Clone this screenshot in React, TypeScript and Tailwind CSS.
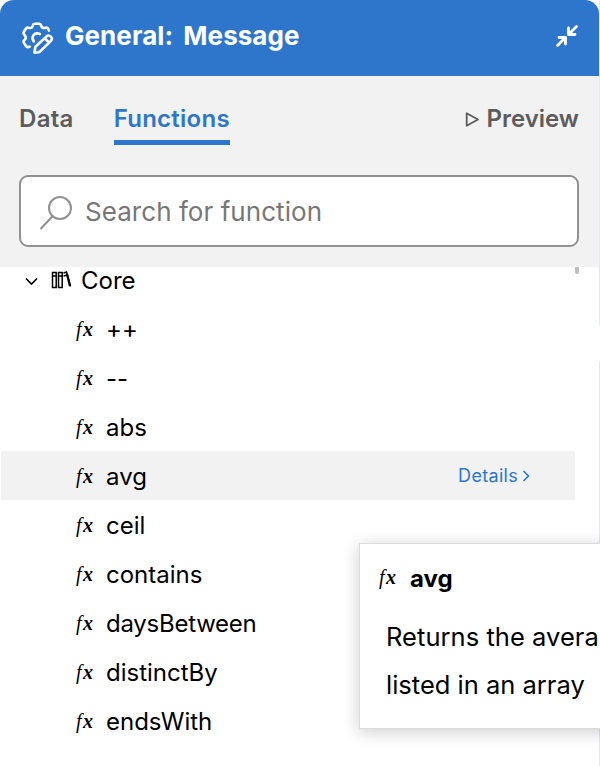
import React from "react";

const functionNames = ["++", "--", "abs", "avg", "ceil", "contains", "daysBetween", "distinctBy", "endsWith"];

function Fx() {
  return (
    <span className="flex h-6 w-[31px] shrink-0 items-center font-['Liberation_Serif',serif] text-[20px] leading-none text-black">
      <i className="ml-[1px] w-[6px] font-normal">f</i>
      <i className="ml-[1px] font-bold">x</i>
    </span>
  );
}

function GearPencil() {
  return (
    <svg width="34" height="34" viewBox="0 0 34 34" fill="none" stroke="white" strokeWidth="2.6" strokeLinecap="round" strokeLinejoin="round">
      <path d="M8.8 25.6 Q6 27 4.6 24.5 L3 21.8 Q2 20 3.7 18.8 Q5.8 16.8 3.9 14.5 Q1.8 12.5 2.9 10.7 L4.6 8 Q5.8 6.1 8 6.9 Q11 7.6 11.7 5 Q12.2 2.8 14.2 2.8 H17.8 Q19.7 2.8 20.3 5 Q21.2 7.6 24 6.9 Q26.3 6.1 27.2 7.9 L28 9.6" />
      <path d="M12.8 20.4 C9.6 16.2 13.2 10.6 18.8 13" />
      <path d="M13.4 31.7 L14.4 25.8 L25.6 15.4 Q27.7 13.5 29.8 15.6 Q31.9 17.8 29.9 19.9 L19.2 30.4 Q18.4 31 17.5 31.2 Z M23.8 17.3 L28 21.5" />
    </svg>
  );
}

export default function App() {
  return (
    <div className="relative h-[766px] w-[600px] overflow-hidden bg-white font-['Inter',sans-serif] text-black">
      <div className="flex h-full flex-col border-r border-[#e7e7f0]">
        <header className="flex h-[76px] shrink-0 items-center rounded-t-[14px] bg-[#2d76cc] pr-[20px] pl-[21px] text-white">
          <GearPencil />
          <h1 className="ml-[10px] pb-[5px] text-[26px] font-bold tracking-[0.05px] [word-spacing:4px] whitespace-pre">General: Message</h1>
          <svg className="-mt-[4px] ml-auto" width="24" height="24" viewBox="0 0 24 24" fill="none" stroke="white" strokeWidth="2.8" strokeLinejoin="round" strokeLinecap="round">
            <path d="M21.5 2.5 L14 10 M13.5 4 V10.5 H20 M2.5 21.5 L10 14 M4 13.5 H10.5 V20" />
          </svg>
        </header>
        <section className="h-[191px] shrink-0 bg-[#f2f2f2] pr-[20px] pl-[19px]">
          <nav className="flex h-[99px] items-start pt-[24px] text-[24px] font-semibold text-[#5c5c5c]">
            <span className="tracking-[0.3px] leading-[38px]">Data</span>
            <span className="ml-[40px] h-[45px] border-b-[5px] border-[#2d76cc] tracking-[0.25px] leading-[38px] text-[#2d76cc]">Functions</span>
            <span className="ml-auto flex items-center leading-[38px]">
              <svg className="mr-[6px]" width="15" height="17" viewBox="0 0 15 17" fill="none" stroke="#5c5c5c" strokeWidth="1.8" strokeLinejoin="round">
                <path d="M1.7 2.2 V14.8 L13 8.5 Z" />
              </svg>
              Preview
            </span>
          </nav>
          <div className="flex h-[72px] items-center rounded-[9px] border-2 border-[#919191] bg-white pl-[18px] text-[26px] text-[#777]">
            <svg className="mt-[3px]" width="34" height="36" viewBox="0 0 34 36" fill="none" stroke="#919191" strokeWidth="2">
              <circle cx="21" cy="13" r="11" />
              <path d="M13.3 21.5 L1.5 34" />
            </svg>
            <span className="mt-[1px] ml-[12px] tracking-[0.05px]">Search for function</span>
          </div>
        </section>
        <main className="text-[24px]">
          <div className="flex h-[37px] items-start pl-[25px]">
            <svg className="mt-[10px]" width="13" height="9" viewBox="0 0 13 9" fill="none" stroke="black" strokeWidth="1.6">
              <path d="M1 1.5 L6.5 7 L12 1.5" />
            </svg>
            <svg className="mt-[4px] ml-[13px]" width="21" height="18" viewBox="0 0 21 18" fill="none" stroke="black" strokeWidth="1.5">
              <path d="M1.5 1.5 H5.2 V16.5 H1.5 Z M7.5 1.5 H11.2 V16.5 H7.5 Z M1.5 5 H5.2 M7.5 5 H11.2 M12.5 2 L15.5 1 L19.5 15.5 M12.5 5 L16.5 4" />
              <path d="M16 3 L19 15" strokeWidth="2.3" />
            </svg>
            <span className="ml-[9px] leading-[27px]">Core</span>
            <i className="mr-[20px] ml-auto h-[7px] w-[4px] rounded-b-sm bg-[#bdbdbd]" />
          </div>
          {functionNames.map((name) => (
            <div key={name} className={`mr-[24px] ml-[1px] flex h-[49px] items-center pl-[74px] ${name === "avg" ? "bg-[#f2f2f2]" : ""}`}>
              <Fx />
              <span className={`pt-[2px] ${name === "daysBetween" ? "tracking-[-0.25px]" : ""}`}>{name}</span>
              {name === "avg" && (
                <span className="mr-[45px] ml-auto flex items-center text-[18px] tracking-[0.3px] text-[#2d76cc]">
                  Details
                  <svg className="ml-[4px]" width="8" height="12" viewBox="0 0 8 12" fill="none" stroke="#2d76cc" strokeWidth="1.6">
                    <path d="M1.5 1 L6.5 6 L1.5 11" />
                  </svg>
                </span>
              )}
            </div>
          ))}
        </main>
      </div>
      {/* Resize notch over the panel's right edge */}
      <i className="absolute top-[325px] right-0 h-[36px] w-px bg-white" />
      <aside className="absolute top-[543px] left-[359px] h-[186px] w-[300px] border border-[#dcdcdc] bg-white pl-[18px] shadow-[0_3px_16px_rgba(0,0,0,0.2)]">
        <div className="flex h-[66px] items-center text-[24px] font-bold">
          <Fx />
          <span className="ml-[1px] pt-[4px]">avg</span>
        </div>
        <p className="pt-[3px] pl-[8px] text-[25.5px] leading-[48px] whitespace-nowrap">
          <span className="block tracking-[0.05px]">Returns the avera</span>
          <span className="block">listed in an array</span>
        </p>
      </aside>
    </div>
  );
}
